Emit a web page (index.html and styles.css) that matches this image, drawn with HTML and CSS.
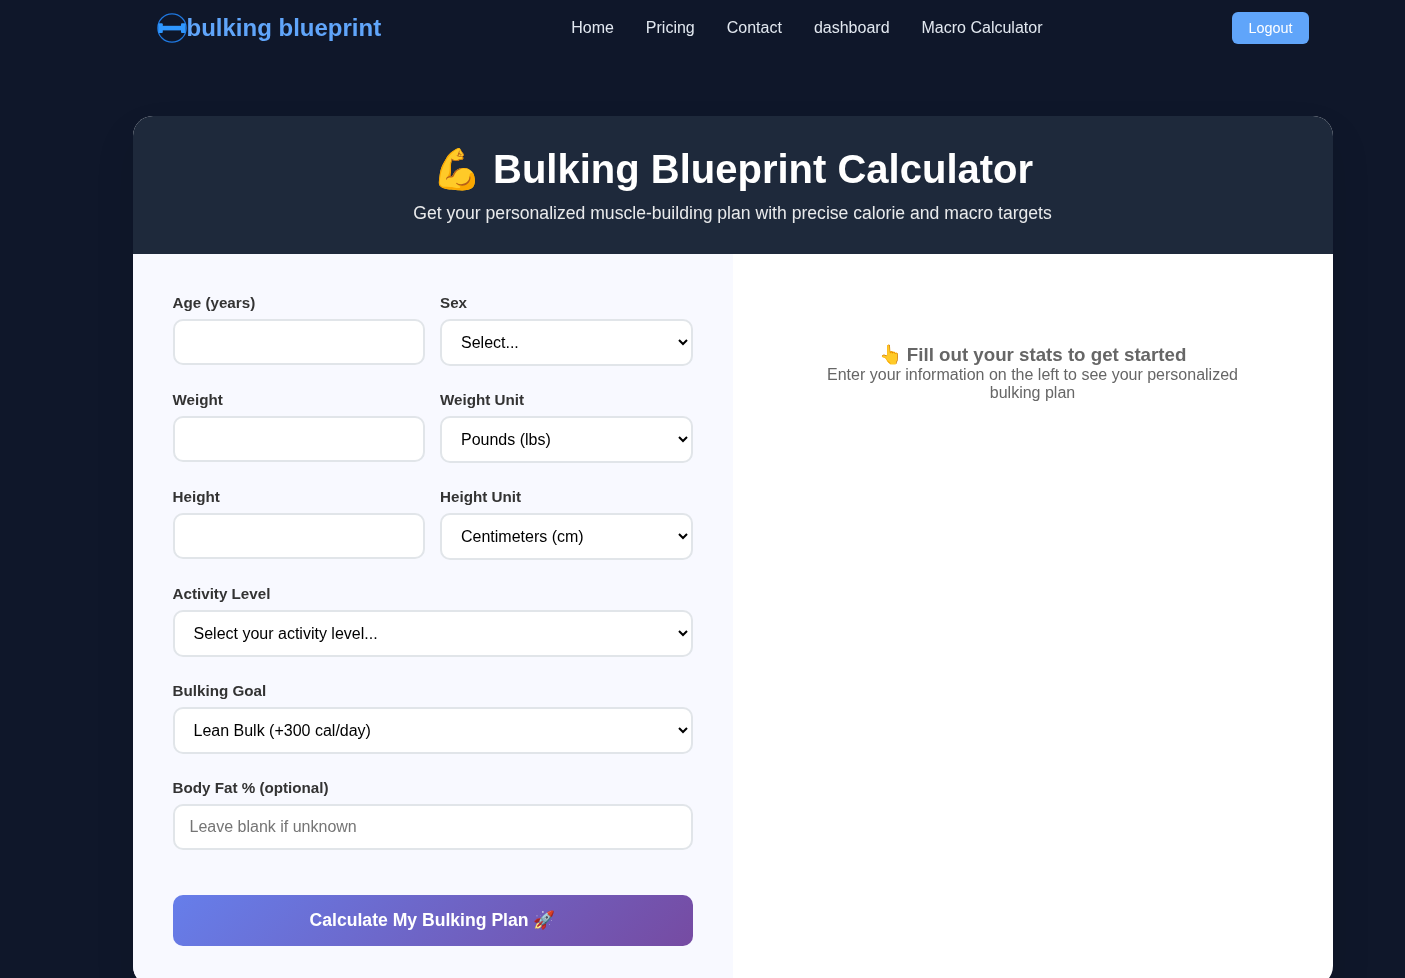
FILE: index.html
```html
<!DOCTYPE html>
<html lang="en">
<head>
<meta charset="utf-8">
<title>Bulking Blueprint Calculator</title>
<link rel="stylesheet" href="styles.css">
</head>
<body>
<div class="page">
  <nav class="nav">
    <a class="logo" href="#">
      <svg class="logo-icon" viewBox="0 0 30 30" width="30" height="30" aria-hidden="true">
        <circle cx="15" cy="15" r="14.2" fill="none" stroke="#1f78e0" stroke-width="1.2"/>
        <rect x="1.2" y="10.2" width="4.6" height="9.8" rx="1" fill="#2f97ff"/>
        <rect x="24" y="10.2" width="4.6" height="9.8" rx="1" fill="#2f97ff"/>
        <rect x="4" y="12.8" width="22" height="4.6" fill="#2f97ff"/>
      </svg>
      <span>bulking blueprint</span>
    </a>
    <div class="nav-links">
      <a href="#">Home</a>
      <a href="#">Pricing</a>
      <a href="#">Contact</a>
      <a href="#">dashboard</a>
      <a href="#">Macro Calculator</a>
    </div>
    <button class="logout" type="button">Logout</button>
  </nav>
  <main class="card">
    <header class="hero">
      <h1>💪 Bulking Blueprint Calculator</h1>
      <p>Get your personalized muscle-building plan with precise calorie and macro targets</p>
    </header>
    <div class="columns">
      <form class="form">
        <div class="row">
          <div class="group"><label>Age (years)</label><input type="number"></div>
          <div class="group"><label>Sex</label><select><option>Select...</option><option>Male</option><option>Female</option></select></div>
        </div>
        <div class="row">
          <div class="group"><label>Weight</label><input type="number"></div>
          <div class="group"><label>Weight Unit</label><select><option>Pounds (lbs)</option><option>Kilograms (kg)</option></select></div>
        </div>
        <div class="row">
          <div class="group"><label>Height</label><input type="number"></div>
          <div class="group"><label>Height Unit</label><select><option>Centimeters (cm)</option><option>Inches (in)</option></select></div>
        </div>
        <div class="group"><label>Activity Level</label><select><option>Select your activity level...</option></select></div>
        <div class="group"><label>Bulking Goal</label><select><option>Lean Bulk (+300 cal/day)</option></select></div>
        <div class="group"><label>Body Fat % (optional)</label><input type="number" placeholder="Leave blank if unknown"></div>
        <button class="submit" type="button">Calculate My Bulking Plan 🚀</button>
      </form>
      <section class="results">
        <h3>👆 Fill out your stats to get started</h3>
        <p>Enter your information on the left to see your personalized bulking plan</p>
      </section>
    </div>
  </main>
</div>
</body>
</html>
```
FILE: styles.css
```css
* { box-sizing: border-box; }
html, body { margin: 0; padding: 0; }
body {
  background: #0f172a;
  font-family: "Liberation Sans", Arial, sans-serif;
  color: #333;
}
.page { width: 1200.5px; margin-left: 132px; padding-left: .5px; will-change: transform; }
.nav {
  display: flex;
  align-items: center;
  justify-content: space-between;
  height: 56px;
  padding: 0 24px;
}
.logo {
  display: flex;
  align-items: center;
  color: #60a5fa;
  font-size: 24px;
  font-weight: 700;
  text-decoration: none;
}
.logo-icon { display: block; flex: none; }
.nav-links { display: flex; gap: 32px; }
.nav-links a { color: #e2e8f0; font-size: 16px; text-decoration: none; }
.logout {
  height: 32px;
  padding: 0 16px;
  border: 0;
  border-radius: 6px;
  background: #60a5fa;
  color: #fff;
  font: 14.4px "Liberation Sans", Arial, sans-serif;
}
.card {
  margin-top: 60px;
  background: #fff;
  border-radius: 20px;
  overflow: hidden;
  box-shadow: 0 20px 40px rgba(0, 0, 0, .1);
}
.hero {
  height: 138px;
  padding: 30px;
  background: #1e293b;
  color: #fff;
  text-align: center;
}
.hero h1 { margin: 0 0 10px; font-size: 40px; line-height: 46px; font-weight: 700; }
.hero p { margin: 0; font-size: 17.6px; line-height: 22px; opacity: .9; }
.columns { display: grid; grid-template-columns: 1fr 1fr; }
.form { padding: 40px; background: #f8f9ff; }
.row { display: grid; grid-template-columns: 1fr 1fr; gap: 15px; }
.group { margin-bottom: 25px; }
.group label {
  display: block;
  margin-bottom: 8px;
  font-size: 15.2px;
  line-height: 17px;
  font-weight: 700;
  color: #333;
}
.group input, .group select {
  display: block;
  width: 100%;
  padding: 12px 15px;
  border: 2px solid #e1e5e9;
  border-radius: 10px;
  background: #fff;
  font-family: "Liberation Sans", Arial, sans-serif;
  font-size: 16px;
  color: #000;
}
.submit {
  display: block;
  width: 100%;
  height: 51px;
  margin-top: 45px;
  border: 0;
  border-radius: 10px;
  background: linear-gradient(135deg, #667eea 0%, #764ba2 100%);
  color: #fff;
  font: 700 17.6px "Liberation Sans", Arial, sans-serif;
}
.results { padding: 90px 90px 40px; text-align: center; color: #666; }
.results h3 { margin: 0; font-size: 18.72px; line-height: 22px; font-weight: 700; }
.results p { margin: 0; font-size: 16px; line-height: 18px; }
```
